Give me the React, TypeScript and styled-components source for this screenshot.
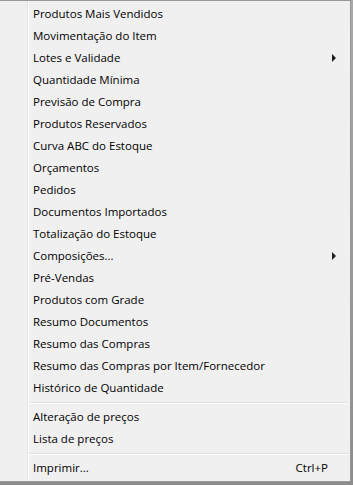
import styled, { createGlobalStyle } from 'styled-components';

const GlobalStyle = createGlobalStyle`
  html, body {
    margin: 0;
    padding: 0;
  }
  body {
    width: 353px;
    height: 485px;
    overflow: hidden;
    background: linear-gradient(to bottom, #a9a9a9 0, #8c8c8c 100%);
    font-family: 'Segoe UI', 'Open Sans', 'DejaVu Sans', sans-serif;
  }
`;

const Menu = styled.div`
  box-sizing: border-box;
  width: 351px;
  height: 482px;
  padding-top: 2px;
  border: 1px solid #979797;
  border-left: none;
  background: linear-gradient(
    to right,
    #f0f0f0 0 27px,
    #e2e3e3 27px 28px,
    #ffffff 28px 29px,
    #f0f0f0 29px
  );
  display: flex;
  flex-direction: column;
`;

const Item = styled.div`
  display: flex;
  align-items: center;
  height: 22px;
  padding-left: 33px;
  padding-right: 14px;
  font-size: 11.5px;
  line-height: 20px;
  color: #000;
  white-space: nowrap;
`;

const Label = styled.span`
  flex: 1;
`;

const Shortcut = styled.span`
  margin-right: 8px;
`;

const Arrow = styled.span`
  width: 0;
  height: 0;
  border-top: 4px solid transparent;
  border-bottom: 4px solid transparent;
  border-left: 4px solid #1e1e1e;
`;

const Separator = styled.div`
  height: 7px;
  margin-left: 29px;
  margin-right: 2px;
  display: flex;
  flex-direction: column;
  justify-content: center;

  &::before {
    content: '';
    height: 1px;
    background: #e0e0e0;
  }
  &::after {
    content: '';
    height: 1px;
    background: #ffffff;
  }
`;

type Entry =
  | { label: string; submenu?: boolean; shortcut?: string }
  | 'sep';

const entries: Entry[] = [
  { label: 'Produtos Mais Vendidos' },
  { label: 'Movimentação do Item' },
  { label: 'Lotes e Validade', submenu: true },
  { label: 'Quantidade Mínima' },
  { label: 'Previsão de Compra' },
  { label: 'Produtos Reservados' },
  { label: 'Curva ABC do Estoque' },
  { label: 'Orçamentos' },
  { label: 'Pedidos' },
  { label: 'Documentos Importados' },
  { label: 'Totalização do Estoque' },
  { label: 'Composições...', submenu: true },
  { label: 'Pré-Vendas' },
  { label: 'Produtos com Grade' },
  { label: 'Resumo Documentos' },
  { label: 'Resumo das Compras' },
  { label: 'Resumo das Compras por Item/Fornecedor' },
  { label: 'Histórico de Quantidade' },
  'sep',
  { label: 'Alteração de preços' },
  { label: 'Lista de preços' },
  'sep',
  { label: 'Imprimir...', shortcut: 'Ctrl+P' },
];

export default function App() {
  return (
    <>
      <GlobalStyle />
      <Menu>
        {entries.map((e, i) =>
          e === 'sep' ? (
            <Separator key={i} />
          ) : (
            <Item key={i}>
              <Label>{e.label}</Label>
              {e.shortcut && <Shortcut>{e.shortcut}</Shortcut>}
              {e.submenu && <Arrow />}
            </Item>
          )
        )}
      </Menu>
    </>
  );
}
